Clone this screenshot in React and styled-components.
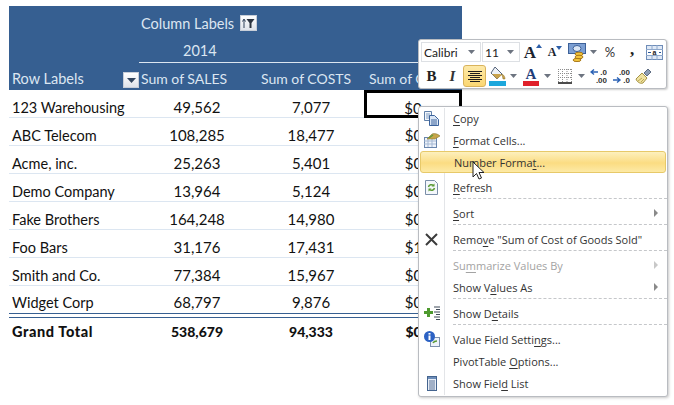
import React from "react";
import styled, { createGlobalStyle } from "styled-components";

const rows = [
  ["123 Warehousing", "49,562", "7,077", "$0"],
  ["ABC Telecom", "108,285", "18,477", "$0"],
  ["Acme, inc.", "25,263", "5,401", "$0"],
  ["Demo Company", "13,964", "5,124", "$0"],
  ["Fake Brothers", "164,248", "14,980", "$0"],
  ["Foo Bars", "31,176", "17,431", "$1"],
  ["Smith and Co.", "77,384", "15,967", "$0"],
  ["Widget Corp", "68,797", "9,876", "$0"],
];

const GlobalStyle = createGlobalStyle`
  html, body {
    margin: 0;
    background: #fff;
    overflow: hidden;
  }
`;

const Page = styled.div`
  position: relative;
  width: 674px;
  height: 405px;
  padding: 6px 0 0 9px;
  box-sizing: border-box;
  font-family: Lato, "Liberation Sans", sans-serif;
  font-size: 15px;
  color: #111;
`;

const Table = styled.div`
  width: 453px;
`;

const HeaderBlock = styled.div`
  background: #365f91;
  color: #dce6f1;
`;

const HeaderRow = styled.div`
  display: grid;
  grid-template-columns: 130px 94px 132px 97px;
  height: ${(p) => p.$h}px;
  align-items: center;
`;

const HeaderSpan = styled.div`
  grid-column: 2 / 5;
  display: flex;
  align-items: center;
  height: 100%;
  box-sizing: border-box;
  font-size: 14.5px;
  padding: ${(p) => p.$pad || "0 0 0 2px"};
  gap: 6px;
  border-bottom: ${(p) => (p.$line ? "1px solid #dce6f1" : "none")};
`;

const HeaderCell = styled.div`
  display: flex;
  align-items: center;
  justify-content: space-between;
  white-space: nowrap;
  box-sizing: border-box;
  height: 100%;
  font-size: ${(p) => p.$size || 14}px;
  padding: 3px 0 0 ${(p) => p.$pl || 0}px;
`;

const Row = styled.div`
  display: grid;
  grid-template-columns: 130px 94px 132px 97px;
  height: 28px;
  box-sizing: border-box;
  border-bottom: 1px solid #dce6f1;
  ${(p) => p.$last && "height: 27px; border-bottom: 1px solid #fff;"}
`;

const Cell = styled.div`
  position: relative;
  display: flex;
  align-items: flex-end;
  padding-bottom: ${(p) => (p.$bold ? 3 : 1)}px;
  white-space: nowrap;
  justify-content: ${(p) => (p.$label ? "flex-start" : "center")};
  padding-left: ${(p) => p.$pl || 0}px;
  font-size: ${(p) => (p.$label ? 14.5 : p.$bold ? 14 : 15)}px;
  font-weight: ${(p) => (p.$bold ? 900 : 400)};
  ${(p) => p.$label && p.$bold && "letter-spacing: 0.6px;"}
  ${(p) => p.$selected && "box-shadow: inset 0 0 0 3px #000; margin: 0 0 -1px -1px;"}
`;

const DoubleRule = styled.div`
  height: 3px;
  border-top: 1px solid #365f91;
  border-bottom: 1px solid #365f91;
  background: #fff;
`;

const TotalRow = styled(Row)`
  height: 25px;
  border-bottom: none;
`;

const FilterButton = styled.span`
  display: inline-flex;
  align-items: center;
  justify-content: center;
  width: ${(p) => p.$w}px;
  height: 16px;
  background: linear-gradient(#fff, #dfe3ea);
  border: 1px solid #c8ced8;
  box-sizing: border-box;
  ${(p) => p.$low && "margin-top: 4px;"}
`;

const FloatBar = styled.div`
  position: absolute;
  left: 418px;
  top: 39px;
  width: 249px;
  height: 50px;
  box-sizing: border-box;
  padding: 2px 0 0 2px;
  background: #fff;
  border: 1px solid #b9bcc1;
  border-radius: 3px;
  box-shadow: 1px 1px 2px rgba(0, 0, 0, 0.2);
  display: flex;
  flex-direction: column;
  gap: 3px;
  font-family: Lato, "Liberation Sans", sans-serif;
  font-size: 12px;
  color: #222;
`;

const BarRow = styled.div`
  display: flex;
  align-items: center;
  height: ${(p) => p.$h}px;
`;

const Combo = styled.div`
  width: ${(p) => p.$w}px;
  height: 20px;
  box-sizing: border-box;
  margin-right: 1px;
  border: 1px solid #dde0e4;
  padding: 0 5px 0 2px;
  display: flex;
  align-items: center;
  justify-content: space-between;
`;

const Tool = styled.div`
  width: ${(p) => p.$w}px;
  height: ${(p) => (p.$active ? 22 : 20)}px;
  flex: none;
  box-sizing: border-box;
  display: flex;
  align-items: center;
  justify-content: center;
  border-radius: 3px;
  ${(p) =>
    p.$active &&
    "background: linear-gradient(#fde9a8, #fbd773); border: 1px solid #d9b35c;"}
`;

const GlyphB = styled.span`
  font-family: "Liberation Serif", serif;
  font-weight: 700;
  font-size: 15px;
`;

const GlyphI = styled.span`
  font-family: "Liberation Serif", serif;
  font-style: italic;
  font-weight: 700;
  font-size: 15px;
  color: #333;
`;

const GlyphA = styled.span`
  font-family: "Liberation Serif", serif;
  font-weight: 700;
  font-size: ${(p) => p.$size}px;
  line-height: 1;
  color: #1b2430;
`;

const GrowWrap = styled.span`
  display: flex;
  align-items: flex-start;
`;

const Percent = styled.span`
  font-size: 13px;
  color: #333;
`;

const Comma = styled.span`
  font-family: "Liberation Serif", serif;
  font-size: 17px;
  font-weight: 700;
  line-height: 1;
  margin-top: -5px;
`;

const Menu = styled.div`
  position: absolute;
  left: 418px;
  top: 106px;
  width: 250px;
  height: 291px;
  box-sizing: border-box;
  background: #fff;
  border: 1px solid #b9bcc1;
  border-radius: 3px;
  box-shadow: 1px 1px 3px rgba(0, 0, 0, 0.22);
  font-family: "Open Sans", "Liberation Sans", sans-serif;
  font-size: 11px;
  color: #333;

  &::before {
    content: "";
    position: absolute;
    left: 25px;
    top: 1px;
    bottom: 1px;
    width: 1px;
    background: #e3e5e8;
  }
`;

const Item = styled.div`
  position: relative;
  height: 22px;
  display: flex;
  align-items: center;
  margin: 0 1px;
  box-sizing: border-box;
  color: ${(p) => (p.$disabled ? "#a3a3a3" : "#333")};
  white-space: nowrap;
  ${(p) =>
    p.$hover &&
    `
    z-index: 1;
    background: linear-gradient(#fdf0bd, #fbdc82 55%, #fdeaa6);
    border: 1px solid #e7c969;
    border-radius: 3px;
  `}
`;

const ItemIcon = styled.span`
  width: 23px;
  margin-right: 10px;
  display: flex;
  justify-content: center;
  flex: none;
`;

const ItemText = styled.span`
  flex: 1;

  u {
    text-underline-offset: 2px;
  }
`;

const Arrow = styled.span`
  width: 0;
  height: 0;
  margin-right: 8px;
  border-left: 4px solid ${(p) => (p.$disabled ? "#c8c8c8" : "#8a8a8a")};
  border-top: 4px solid transparent;
  border-bottom: 4px solid transparent;
`;

const Sep = styled.div`
  height: ${(p) => (p.$blank ? 3 : 4)}px;
  margin-left: 34px;
  border-top: ${(p) => (p.$blank ? "none" : "1px dashed #c5c7ca")};
  box-sizing: border-box;
`;

const Pointer = styled.svg`
  position: absolute;
  left: 472px;
  top: 161px;
  z-index: 2;
`;

const Caret = () => (
  <svg width="7" height="4" viewBox="0 0 7 4"><path d="M0 0h7L3.5 4z" fill="#6d7480" /></svg>
);

const ToolCaret = ({ w = 9 }) => (
  <Tool $w={w}><Caret /></Tool>
);

const GrowIcon = ({ size, down }) => (
  <GrowWrap>
    <GlyphA $size={size}>A</GlyphA>
    <svg width="6" height="4" viewBox="0 0 6 4">
      <path d={down ? "M0 0h6L3 4z" : "M0 4h6L3 0z"} fill="#2d5fa8" />
    </svg>
  </GrowWrap>
);

const SortFilterIcon = () => (
  <svg width="13" height="10" viewBox="0 0 13 10">
    <path d="M2 10V2M.5 3.5 2 1l1.5 2.5" stroke="#2c3e57" fill="none" />
    <path d="M4.5 1h8L9.5 5v5h-2V5z" fill="#2c3440" />
  </svg>
);

const DropIcon = () => (
  <svg width="9" height="5" viewBox="0 0 9 5"><path d="M0 0h9L4.5 5z" fill="#33465f" /></svg>
);

const AccountingIcon = () => (
  <svg width="18" height="19" viewBox="0 0 18 19">
    <rect x="0.5" y="0.5" width="17" height="10" fill="#7c9fd3" stroke="#3d6199" />
    <ellipse cx="9" cy="5.5" rx="4" ry="3" fill="#dbe6f5" stroke="#3d6199" />
    <ellipse cx="11" cy="11" rx="4" ry="1.8" fill="#f2c53d" stroke="#a9781a" />
    <ellipse cx="11" cy="14" rx="4" ry="1.8" fill="#f2c53d" stroke="#a9781a" />
    <ellipse cx="9" cy="17" rx="4" ry="1.6" fill="#f2c53d" stroke="#a9781a" />
  </svg>
);

const MergeIcon = () => (
  <svg width="17" height="15" viewBox="0 0 17 15">
    <rect x="0.5" y="0.5" width="16" height="14" fill="#dfe9f6" stroke="#6f8db8" />
    <path d="M0 4.5h17M0 10.5h17M6 0v4M11 0v4M6 11v4M11 11v4" stroke="#8ea8cc" />
    <rect x="1" y="5" width="15" height="5" fill="#fff" />
    <path d="M2 7.5h3M13 7.5h2" stroke="#2b5797" />
    <text x="8.5" y="10" fontSize="7" fontFamily="Liberation Sans" fontWeight="700" textAnchor="middle" fill="#222">a</text>
  </svg>
);

const AlignIcon = () => (
  <svg width="14" height="11" viewBox="0 0 14 11">
    <path d="M0 .5h14M2 2.5h10M0 4.5h14M2 6.5h10M0 8.5h14M2 10.5h10" stroke="#1c1c1c" />
  </svg>
);

const FillIcon = () => (
  <svg width="17" height="20" viewBox="0 0 17 20">
    <path d="M6 1 13 8 8 13 2 7z" fill="#eef2f7" stroke="#56647a" />
    <path d="M3 8h8l2 1-5 4z" fill="#c9a24a" />
    <path d="M13 8c2 1 3 3 3 5h-2z" fill="#c9a24a" stroke="#8a6d25" strokeWidth="0.5" />
    <rect x="0" y="15" width="17" height="5" fill="#1da7dc" />
  </svg>
);

const FontColorIcon = () => (
  <svg width="16" height="20" viewBox="0 0 16 20">
    <text x="8" y="13" fontSize="15" fontFamily="Liberation Serif" fontWeight="700" textAnchor="middle" fill="#1f3d7a">A</text>
    <rect x="0" y="15" width="16" height="5" fill="#e0202a" />
  </svg>
);

const BordersIcon = () => (
  <svg width="14" height="15" viewBox="0 0 14 15">
    <path d="M.5 0v13M4.5 0v13M9 0v13M13.5 0v13M0 .5h14M0 4.5h14M0 8.5h14" stroke="#8d8d8d" strokeDasharray="1 1" />
    <path d="M0 14h14" stroke="#111" strokeWidth="1.5" />
  </svg>
);

const DecimalsIcon = ({ flip }) => (
  <svg width="17" height="16" viewBox="0 0 17 16">
    <text x="17" y="7" fontSize="8" fontFamily="Liberation Sans" fontWeight="700" textAnchor="end" fill="#333">{flip ? ".00" : ".0"}</text>
    <text x="17" y="15" fontSize="8" fontFamily="Liberation Sans" fontWeight="700" textAnchor="end" fill="#333">{flip ? ".0" : ".00"}</text>
    {flip ? (
      <path d="M0 12h6M4 9.5 7 12l-3 2.5" stroke="#2b62b5" strokeWidth="1.4" fill="none" />
    ) : (
      <path d="M8 4H2M4 1.5 1 4l3 2.5" stroke="#2b62b5" strokeWidth="1.4" fill="none" />
    )}
  </svg>
);

const BrushIcon = () => (
  <svg width="17" height="17" viewBox="0 0 17 17">
    <path d="M1 11 7 5l5 5-4 5c-3 1-6-1-7-4z" fill="#efe2a2" stroke="#a69344" />
    <path d="M3 13l4-3M6 14l3-3" stroke="#bda94f" />
    <path d="M9 5l4-4 3 3-4 4z" fill="#8c9db5" stroke="#5d6c82" />
  </svg>
);

const CopyIcon = () => (
  <svg width="15" height="15" viewBox="0 0 15 15">
    <path d="M.5.5h7v9h-7z" fill="#f2f6fb" stroke="#5f7fa8" />
    <path d="M2 3h4M2 5h4M2 7h4" stroke="#7f9cc2" />
    <path d="M5.5 4.5h5l4 4v6h-9z" fill="#dbe7f6" stroke="#3c639c" />
    <path d="M7 9h6M7 11h6M7 13h6" stroke="#3c639c" />
  </svg>
);

const FormatIcon = () => (
  <svg width="16" height="15" viewBox="0 0 16 15">
    <rect x="0.5" y="4.5" width="12" height="10" fill="#eef3fa" stroke="#6a86ad" />
    <path d="M0 8h12M0 11h12M4 5v9M8 5v9" stroke="#a5b8d3" />
    <path d="M3 6 8 1c3-1 6 0 8 2l-5 3c-2 0-5 0-8 0z" fill="#c7a549" stroke="#8a7a36" strokeWidth="0.6" />
    <path d="M5 5l4-3" stroke="#5f9a3a" strokeWidth="1.4" />
  </svg>
);

const RefreshIcon = () => (
  <svg width="13" height="15" viewBox="0 0 13 15">
    <path d="M.5.5h9l3 3v11H.5z" fill="#f4f7fb" stroke="#7a8ea8" />
    <path d="M3.5 7a3 3 0 0 1 5-1.500M9.5 8a3 3 0 0 1-5 1.500" stroke="#5b9a35" strokeWidth="1.5" fill="none" />
    <path d="M9.5 3.5v3h-3zM3.5 11.5v-3h3z" fill="#5b9a35" />
  </svg>
);

const CrossIcon = () => (
  <svg width="13" height="13" viewBox="0 0 13 13">
    <path d="M1 1l11 11M12 1 1 12" stroke="#3b3b3b" strokeWidth="2" />
  </svg>
);

const DetailsIcon = () => (
  <svg width="16" height="14" viewBox="0 0 16 14">
    <path d="M3 2h3v3h3v3H6v3H3V8H0V5h3z" fill="#4e9a2e" />
    <path d="M10 1h6M12 3.5h4M10 6h6M12 8.5h4M10 11h6M12 13.5h4" stroke="#3f4a58" />
  </svg>
);

const InfoIcon = () => (
  <svg width="16" height="16" viewBox="0 0 16 16">
    <rect x="6.5" y="6.5" width="9" height="9" fill="#eef3fa" stroke="#7c90ad" />
    <path d="M9 12c1-2 3-2 4-2" stroke="#5b9a35" strokeWidth="1.5" fill="none" />
    <circle cx="5.5" cy="5.5" r="5.5" fill="#2c62c4" />
    <rect x="4.5" y="4.5" width="2" height="4.5" fill="#fff" />
    <rect x="4.5" y="2" width="2" height="1.6" fill="#fff" />
  </svg>
);

const FieldListIcon = () => (
  <svg width="10" height="15" viewBox="0 0 10 15">
    <rect x="0.5" y="0.5" width="9" height="14" fill="#e8eef7" stroke="#44648f" />
    <rect x="1" y="1" width="8" height="2" fill="#6d8db9" />
    <path d="M2 5h6M2 7h6M2 9h6M2 11h6M2 13h6" stroke="#5b7397" />
  </svg>
);

const menuEntries = [
  { label: "&Copy", icon: <CopyIcon /> },
  { label: "&Format Cells...", icon: <FormatIcon /> },
  { label: "Number Forma&t...", hover: true },
  { sep: true, blank: true },
  { label: "&Refresh", icon: <RefreshIcon /> },
  { sep: true },
  { label: "&Sort", arrow: true },
  { sep: true },
  { label: 'Remo&ve "Sum of Cost of Goods Sold"', icon: <CrossIcon /> },
  { sep: true },
  { label: "Su&mmarize Values By", arrow: true, disabled: true },
  { label: "Show V&alues As", arrow: true },
  { sep: true },
  { label: "Show D&etails", icon: <DetailsIcon /> },
  { sep: true },
  { label: "Value Field Setti&ngs...", icon: <InfoIcon /> },
  { label: "PivotTable &Options..." },
  { label: "Show Fiel&d List", icon: <FieldListIcon /> },
];

const Mnemonic = ({ label }) => {
  const at = label.indexOf("&");
  return (
    <>
      {label.slice(0, at)}
      <u>{label[at + 1]}</u>
      {label.slice(at + 2)}
    </>
  );
};

const App = () => (
  <Page>
    <GlobalStyle />
    <Table>
      <HeaderBlock>
        <HeaderRow $h={28}>
          <HeaderSpan $pad="6px 0 0 2px">
            Column Labels
            <FilterButton $w={17}><SortFilterIcon /></FilterButton>
          </HeaderSpan>
        </HeaderRow>
        <HeaderRow $h={29}>
          <HeaderSpan $pad="5px 0 0 44px" $line>2014</HeaderSpan>
        </HeaderRow>
        <HeaderRow $h={27}>
          <HeaderCell $pl={3} $size={14.5}>
            Row Labels
            <FilterButton $w={16} $low><DropIcon /></FilterButton>
          </HeaderCell>
          <HeaderCell $pl={2}>Sum of SALES</HeaderCell>
          <HeaderCell $pl={28}>Sum of COSTS</HeaderCell>
          <HeaderCell $pl={4}>Sum of C</HeaderCell>
        </HeaderRow>
      </HeaderBlock>
      {rows.map((r, i) => (
        <Row key={r[0]} $last={i === rows.length - 1}>
          <Cell $label $pl={3}>{r[0]}</Cell>
          <Cell $pl={22}>{r[1]}</Cell>
          <Cell $pl={24}>{r[2]}</Cell>
          <Cell $selected={i === 0}>{r[3]}</Cell>
        </Row>
      ))}
      <DoubleRule />
      <TotalRow>
        <Cell $label $pl={3} $bold>Grand Total</Cell>
        <Cell $pl={22} $bold>538,679</Cell>
        <Cell $pl={24} $bold>94,333</Cell>
        <Cell $bold>$0</Cell>
      </TotalRow>
    </Table>

    <FloatBar>
      <BarRow $h={20}>
        <Combo $w={60}>Calibri<Caret /></Combo>
        <Combo $w={38}>11<Caret /></Combo>
        <Tool $w={24}><GrowIcon size={17} /></Tool>
        <Tool $w={20}><GrowIcon size={12} down /></Tool>
        <Tool $w={24}><AccountingIcon /></Tool>
        <ToolCaret />
        <Tool $w={24}><Percent>%</Percent></Tool>
        <Tool $w={20}><Comma>,</Comma></Tool>
        <Tool $w={24}><MergeIcon /></Tool>
      </BarRow>
      <BarRow $h={22}>
        <Tool $w={21}><GlyphB>B</GlyphB></Tool>
        <Tool $w={21}><GlyphI>I</GlyphI></Tool>
        <Tool $w={23} $active><AlignIcon /></Tool>
        <Tool $w={23}><FillIcon /></Tool>
        <ToolCaret />
        <Tool $w={25}><FontColorIcon /></Tool>
        <ToolCaret />
        <Tool $w={25}><BordersIcon /></Tool>
        <ToolCaret />
        <Tool $w={24}><DecimalsIcon /></Tool>
        <Tool $w={22}><DecimalsIcon flip /></Tool>
        <Tool $w={22}><BrushIcon /></Tool>
      </BarRow>
    </FloatBar>

    <Menu>
      {menuEntries.map((entry, i) =>
        entry.sep ? (
          <Sep key={i} $blank={entry.blank} />
        ) : (
          <Item key={entry.label} $hover={entry.hover} $disabled={entry.disabled}>
            <ItemIcon>{entry.icon}</ItemIcon>
            <ItemText><Mnemonic label={entry.label} /></ItemText>
            {entry.arrow && <Arrow $disabled={entry.disabled} />}
          </Item>
        )
      )}
    </Menu>

    <Pointer width="14" height="20" viewBox="0 0 14 20">
      <path d="M1 1v15l3.5-3.5L7 18l2.5-1-2.5-5.500h5z" fill="#fff" stroke="#222" strokeWidth="1" />
    </Pointer>
  </Page>
);

export default App;
